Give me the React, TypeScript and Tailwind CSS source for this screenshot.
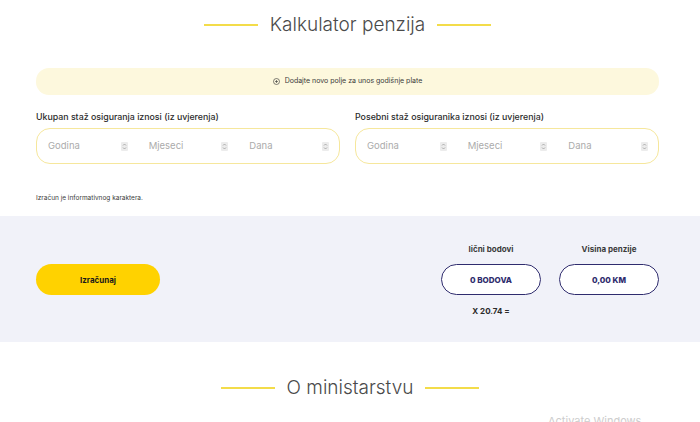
function SectionTitle({ title }: { title: string }) {
  return (
    <div className="flex items-center justify-center gap-3">
      <div className="h-[2px] w-[54px] bg-[#f3dc4a]" />
      <h2 className="text-[19px] leading-[28px] font-light text-[#4a4a4a]">{title}</h2>
      <div className="h-[2px] w-[54px] bg-[#f3dc4a]" />
    </div>
  );
}

function Spinner() {
  return (
    <span className="flex h-[9px] w-[7px] items-center justify-center rounded-[1px] bg-[#ececec]">
      <svg viewBox="0 0 7 9" className="h-[9px] w-[7px]" fill="none" stroke="#9a9a9a" strokeWidth={0.8}>
        <path d="M2 3.5 L3.5 2 L5 3.5" />
        <path d="M2 5.5 L3.5 7 L5 5.5" />
      </svg>
    </span>
  );
}

function DurationGroup({ label }: { label: string }) {
  const fields = ["Godina", "Mjeseci", "Dana"];
  return (
    <div className="flex flex-col">
      <label className="mb-[5px] text-[8.8px] leading-[12px] font-medium text-[#2b2b2b]">{label}</label>
      <div className="grid h-[36px] grid-cols-3 items-center rounded-[14px] border border-[#f6e79c] bg-white">
        {fields.map((f) => (
          <div key={f} className="flex items-center justify-between pl-[11px] pr-[10px]">
            <span className="text-[9.5px] text-[#ababab]">{f}</span>
            <Spinner />
          </div>
        ))}
      </div>
    </div>
  );
}

function ResultPill({ label, value, note }: { label: string; value: string; note?: string }) {
  return (
    <div className="flex w-[100px] flex-col items-center">
      <span className="text-[8px] leading-[12px] font-bold text-[#3a3a3a]">{label}</span>
      <div className="mt-[9px] flex h-[31px] w-full items-center justify-center rounded-full border-[1.5px] border-[#2f2c6e] bg-white">
        <span className="text-[8px] font-extrabold text-[#2f2c6e]">{value}</span>
      </div>
      {note && <span className="mt-[11px] text-[8px] leading-[10px] font-bold text-[#2b2b2b]">{note}</span>}
    </div>
  );
}

export default function App() {
  return (
    <div
      className="relative h-[422px] w-full overflow-hidden bg-white"
      style={{ fontFamily: "Inter, 'Noto Sans', sans-serif" }}
    >
      {/* Kalkulator */}
      <div className="pl-9 pr-[41px] pt-[11px]">
        <SectionTitle title="Kalkulator penzija" />

        <button className="mt-[29px] flex h-[27px] w-full items-center justify-center gap-[5px] rounded-[13px] bg-[#fdf8dd] text-[7px] text-[#3a3a3a]">
          <svg viewBox="0 0 10 10" className="h-[7px] w-[7px]" fill="none" stroke="#3a3a3a" strokeWidth={0.9}>
            <circle cx="5" cy="5" r="4.3" />
            <path d="M5 2.8 V7.2 M2.8 5 H7.2" />
          </svg>
          Dodajte novo polje za unos godišnje plate
        </button>

        <div className="mt-[16px] grid grid-cols-2 gap-[15px]">
          <DurationGroup label="Ukupan staž osiguranja iznosi (iz uvjerenja)" />
          <DurationGroup label="Posebni staž osiguranika iznosi (iz uvjerenja)" />
        </div>

        <p className="mt-[29px] text-[6.5px] leading-[10px] text-[#3a3a3a]">Izračun je informativnog karaktera.</p>
      </div>

      {/* Rezultat */}
      <div className="mt-[13px] flex h-[126px] items-start justify-between bg-[#f1f2f9] pl-9 pr-[41px] pt-[27px]">
        <button className="mt-[21px] flex h-[31px] w-[124px] items-center justify-center rounded-full bg-[#ffd200] text-[8px] font-bold text-[#1a1a1a]">
          Izračunaj
        </button>
        <div className="flex gap-[18px]">
          <ResultPill label="lični bodovi" value="0 BODOVA" note="X 20.74 =" />
          <ResultPill label="Visina penzije" value="0,00 KM" />
        </div>
      </div>

      {/* O ministarstvu */}
      <div className="pt-[32px]">
        <SectionTitle title="O ministarstvu" />
      </div>

      <span className="absolute left-[548px] top-[414px] text-[11px] leading-[14px] text-[#cdcdcd]">Activate Windows</span>
    </div>
  );
}
